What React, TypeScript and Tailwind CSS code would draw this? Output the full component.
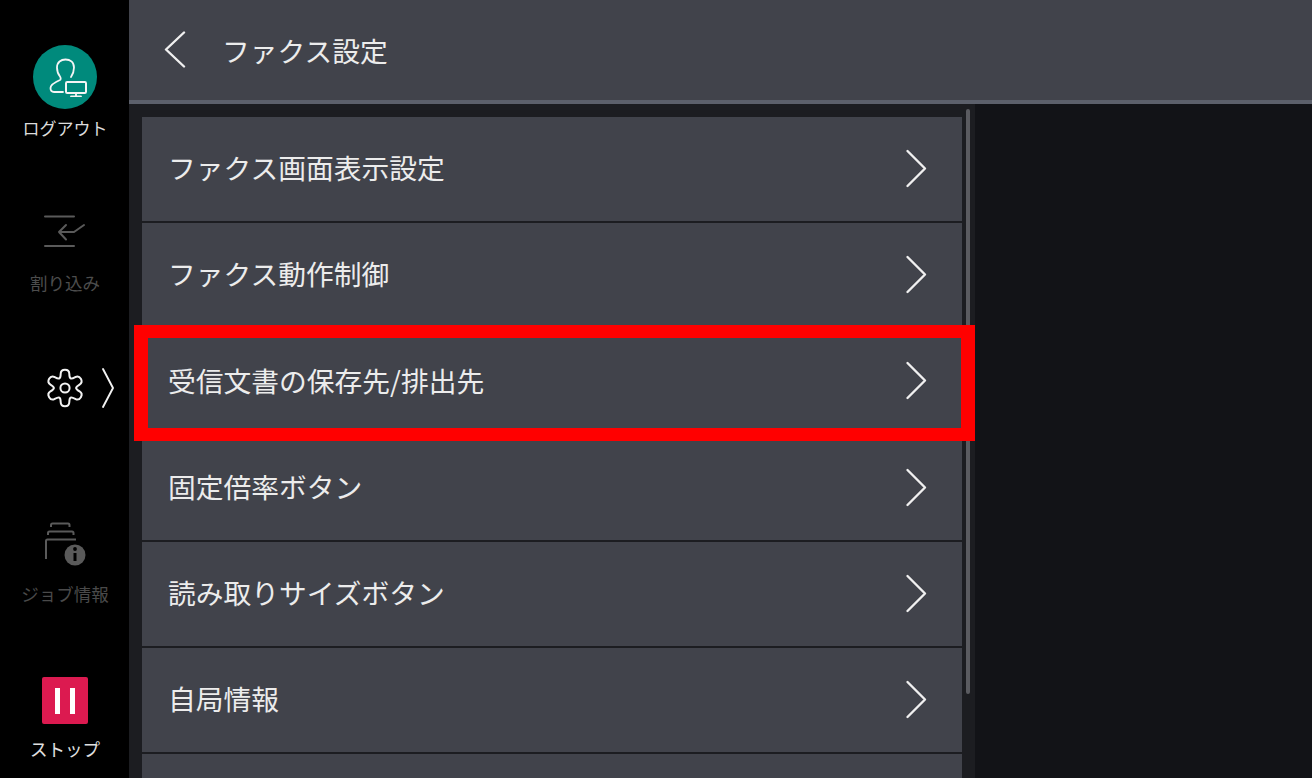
import React from "react";

const rows = [
  "ファクス画面表示設定",
  "ファクス動作制御",
  "受信文書の保存先/排出先",
  "固定倍率ボタン",
  "読み取りサイズボタン",
  "自局情報",
];

function gearPath(cx: number, cy: number) {
  const pts: [number, number][] = [];
  for (let i = 0; i < 6; i++) {
    const a = i * 60 - 90;
    for (const [r, d] of [
      [11.2, -23],
      [18.8, -13],
      [18.8, 13],
      [11.2, 23],
    ] as [number, number][]) {
      const t = ((a + d) * Math.PI) / 180;
      pts.push([cx + r * Math.cos(t), cy + r * Math.sin(t)]);
    }
  }
  const mid = (p: [number, number], q: [number, number]) => [(p[0] + q[0]) / 2, (p[1] + q[1]) / 2];
  const start = mid(pts[pts.length - 1], pts[0]);
  let d = `M${start[0].toFixed(2)} ${start[1].toFixed(2)}`;
  pts.forEach((p, i) => {
    const m = mid(p, pts[(i + 1) % pts.length]);
    d += ` Q${p[0].toFixed(2)} ${p[1].toFixed(2)} ${m[0].toFixed(2)} ${m[1].toFixed(2)}`;
  });
  return d + " Z";
}

function Chevron() {
  return (
    <svg width="24" height="40" viewBox="0 0 24 40" fill="none" stroke="#f0f0f0" strokeWidth="2.4" strokeLinecap="round" strokeLinejoin="round">
      <path d="M3.5 2 L21 19.5 L3.5 37" />
    </svg>
  );
}

function Row({ label }: { label: string }) {
  return (
    <div className="h-[104.2px] shrink-0 bg-[#41434b] flex items-center justify-between pl-[26px] pr-[34px] text-[27.75px] text-[#ececec]">
      <span className="leading-none mb-[2px]">{label}</span>
      <Chevron />
    </div>
  );
}

export default function App() {
  return (
    <div
      className="relative w-[1312px] h-[778px] overflow-hidden flex bg-black"
      style={{ fontFamily: '"Noto Sans CJK JP", "Noto Sans", sans-serif' }}
    >
      <aside className="w-[128px] shrink-0 ml-px flex flex-col items-center bg-black">
        <div className="mt-[45px] w-16 h-16 rounded-full bg-[#008a7c] flex items-center justify-center">
          <svg className="ml-[5px]" width="40" height="40" viewBox="0 0 40 40" fill="none" stroke="#f5f5f5" strokeWidth="1.8" strokeLinecap="round" strokeLinejoin="round">
            <path d="M15 35 H6 C3.5 35 2.5 33.5 2.5 31 C2.5 28 5 26 12 23 C13 22.5 12.8 20.5 12 19.5 C10 17 9 14 9 10.5 C9 5 13 2.5 17.5 2.5 C22 2.5 26 5 26 10.5 C26 14 25 17 23 20" />
            <rect x="18" y="25" width="20" height="11" rx="1.2" strokeWidth="2" />
            <path d="M28 36 V39 M23 39.5 H33" />
          </svg>
        </div>
        <div className="mt-[9px] text-[17px] leading-5 text-[#dcdcdc]">ログアウト</div>

        <svg className="mt-[77px] ml-px" width="44" height="38" viewBox="0 0 44 38" fill="none" stroke="#5a5a5a" strokeWidth="2" strokeLinecap="round" strokeLinejoin="round">
          <path d="M1 1.5 H30 M1 31 H30" />
          <path d="M40 10 L30 17 H15 M22 10 L15 17 L22 24.5" />
        </svg>
        <div className="mt-[20px] text-[17.5px] leading-5 text-[#4d4d4d]">割り込み</div>

        <div className="mt-[75px] self-start ml-[43px] flex items-center gap-[15px] h-10">
          <svg width="42" height="44" viewBox="0 0 42 44" fill="none" stroke="#f2f2f2" strokeWidth="2" strokeLinecap="round" strokeLinejoin="round">
            <path d={gearPath(21, 22)} />
            <circle cx="21" cy="22" r="4.6" />
          </svg>
          <svg width="14" height="42" viewBox="0 0 14 42" fill="none" stroke="#f2f2f2" strokeWidth="1.9" strokeLinecap="round" strokeLinejoin="round">
            <path d="M2 2 L12 21 L2 40" />
          </svg>
        </div>

        <svg className="mt-[114px] ml-[4px]" width="44" height="44" viewBox="0 0 44 44" fill="none" stroke="#5a5a5a" strokeWidth="2">
          <path d="M6 5 V3 C6 2 6.5 1.5 7.5 1.5 H23 C24 1.5 24.5 2 24.5 3 V5" />
          <path d="M3 13 V11 C3 10 3.5 9.5 4.5 9.5 H27 C28 9.5 28.5 10 28.5 11 V13" />
          <path d="M1 37 V19 C1 18 1.5 17.5 2.5 17.5 H31" />
          <circle cx="30" cy="33" r="10.5" fill="#5a5a5a" stroke="none" />
          <path d="M30 31 V39" stroke="#000" strokeWidth="3" />
          <circle cx="30" cy="27" r="1.9" fill="#000" stroke="none" />
        </svg>
        <div className="mt-[18px] text-[17.5px] leading-5 text-[#4a4a4a]">ジョブ情報</div>

        <div className="mt-[73px] w-[46px] h-[47px] rounded-[2px] bg-[#dc1a50] flex items-center justify-center gap-[10px]">
          <div className="w-[5px] h-[26px] bg-white" />
          <div className="w-[5px] h-[26px] bg-white" />
        </div>
        <div className="mt-[15px] text-[17.5px] leading-5 text-[#e0e0e0]">ストップ</div>
      </aside>

      <main className="flex-1 flex flex-col min-w-0">
        <header className="h-[104px] shrink-0 bg-[#41434b] border-b-[4px] border-[#5c606b] flex items-center pl-[34px] gap-[35px]">
          <svg width="24" height="38" viewBox="0 0 24 38" fill="none" stroke="#f0f0f0" strokeWidth="2.4" strokeLinecap="round" strokeLinejoin="round">
            <path d="M21 1.5 L3 18.5 L21 35.5" />
          </svg>
          <span className="text-[27.75px] leading-none text-[#ececec] mt-[2px]">ファクス設定</span>
        </header>
        <div className="flex-1 flex min-h-0">
          <div className="w-[846px] shrink-0 bg-[#1c1d21] flex">
            <div className="w-[820px] ml-[13px] mt-[13px] flex flex-col gap-[2px] overflow-hidden">
              {rows.map((r) => (
                <Row key={r} label={r} />
              ))}
              <div className="flex-1 bg-[#41434b]" />
            </div>
            <div className="ml-[4px] mt-[5px] w-1 h-[585px] rounded-full bg-[#5a5b60]" />
          </div>
          <div className="flex-1 bg-[#121317]" />
        </div>
      </main>

      <div className="absolute left-[134px] top-[325px] w-[841px] h-[116px] border-y-[13px] border-x-[14px] border-[#ff0000]" />
    </div>
  );
}
